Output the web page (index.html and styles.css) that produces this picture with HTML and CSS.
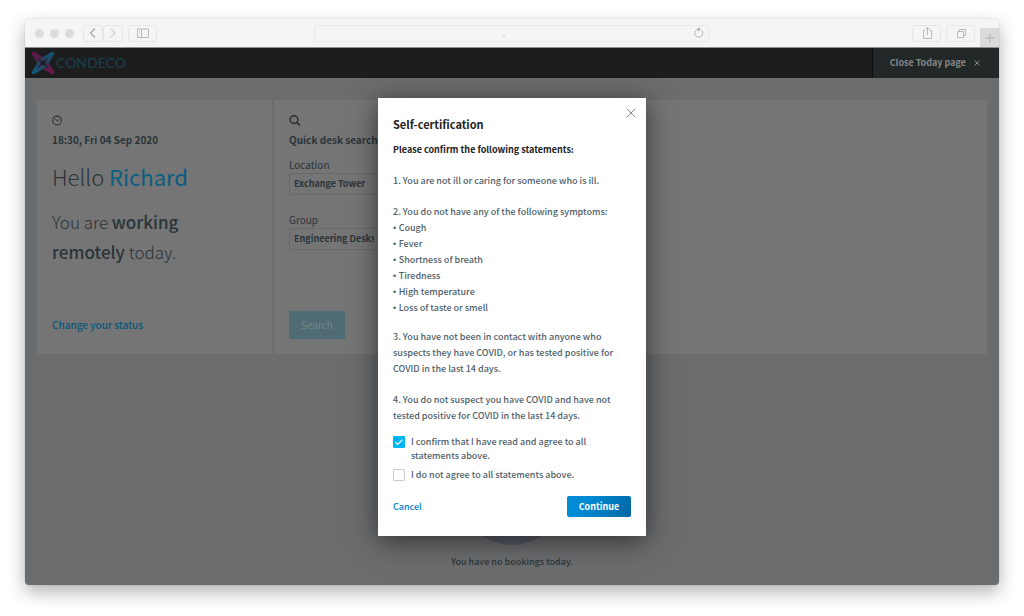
FILE: index.html
```html
<!DOCTYPE html>
<html lang="en">
<head>
<meta charset="utf-8">
<title>Condeco – Today</title>
<link rel="stylesheet" href="styles.css">
</head>
<body>
<div class="window">
  <div class="toolbar">
    <div class="lights"><span class="light"></span><span class="light"></span><span class="light"></span></div>
    <div class="nav">
      <button class="tool tool-nav" aria-label="Back"><svg width="20" height="16" viewBox="0 0 20 16"><path d="M12 3.5 7.500 8l4.500 4.500" fill="none" stroke="#a9a9a9" stroke-width="1.300"/></svg></button>
      <button class="tool tool-nav" aria-label="Forward"><svg width="20" height="16" viewBox="0 0 20 16"><path d="M7.500 3.500 12 8l-4.500 4.500" fill="none" stroke="#d4d4d4" stroke-width="1.300"/></svg></button>
    </div>
    <button class="tool" aria-label="Sidebar"><svg width="16" height="16" viewBox="0 0 16 16"><path d="M2.500 4h11v8.500h-11zM6.500 4v8.500" fill="none" stroke="#b9b9b9"/><path d="M4 6h1M4 8h1" stroke="#c9c9c9"/></svg></button>
    <div class="address">
      <input class="address-input" aria-label="Address" value=".">
      <button class="reload" aria-label="Reload"><svg width="12" height="12" viewBox="0 0 12 12"><path d="M8.800 3.600A4 4 0 1 1 5.500 2.200" fill="none" stroke="#b5b5b5"/><path d="M5 0l3.200 2.200L5 4.400z" fill="#b5b5b5"/></svg></button>
    </div>
    <div class="tools-right">
      <button class="tool" aria-label="Share"><svg width="16" height="16" viewBox="0 0 16 16"><path d="M6 5.500H4.500v8h8v-8H11M8.500 10V2.500M6.500 4.500l2-2 2 2" fill="none" stroke="#b9b9b9"/></svg></button>
      <button class="tool" aria-label="Tabs"><svg width="16" height="16" viewBox="0 0 16 16"><path d="M4.500 6.500h6v6h-6zM6.500 6.500v-2h6v6h-2" fill="none" stroke="#b9b9b9"/></svg></button>
    </div>
    <button class="new-tab" aria-label="New tab"><svg width="10" height="10" viewBox="0 0 10 10"><path d="M5 .5v9M.5 5h9" stroke="#adadad"/></svg></button>
  </div>

  <div class="app">
    <header class="header">
      <div class="brand">
        <svg class="mark" width="24" height="24" viewBox="0 0 24 24" aria-hidden="true">
          <defs>
            <linearGradient id="pink" x1="0" y1="0" x2="1" y2="1"><stop offset="0" stop-color="#6d1548"/><stop offset=".45" stop-color="#35294d"/><stop offset=".7" stop-color="#51214e"/><stop offset="1" stop-color="#781449"/></linearGradient>
            <linearGradient id="blue" x1="1" y1="0" x2="0" y2="1"><stop offset="0" stop-color="#145373"/><stop offset=".5" stop-color="#2c3d5d"/><stop offset="1" stop-color="#0c5c80"/></linearGradient>
          </defs>
          <g fill="none" stroke-width="3.400" stroke-linecap="round" stroke-linejoin="round">
            <path d="M2.500 2.500 13 8.500M2.500 2.500 8 12M21.500 21.500 10.500 15.500M21.500 21.500 16 12" stroke="url(#pink)"/>
            <path d="M21.500 2.500 11 8.500M21.500 2.500 16 12M2.500 21.500 8 12M2.500 21.500 13 15.500" stroke="url(#blue)"/>
          </g>
        </svg>
        <span class="wordmark">CONDECO</span>
      </div>
      <button class="close-today">Close Today page
        <svg width="6" height="6" viewBox="0 0 6 6"><path d="M.5.5l5 5M5.500.5l-5 5" stroke="#858888"/></svg>
      </button>
    </header>

    <main class="content">
      <div class="cards">
        <section class="card status">
          <svg class="icon" width="12" height="12" viewBox="0 0 12 12"><circle cx="5" cy="6.500" r="4.400" fill="none" stroke="#2e363b" stroke-width="1.100"/><path d="M2.800 4.600l2.400 2.200 2-1" fill="none" stroke="#2e363b"/></svg>
          <h2 class="card-title">18:30, Fri 04 Sep 2020</h2>
          <p class="hello">Hello <span class="name">Richard</span></p>
          <p class="where">You are <b>working remotely</b> today.</p>
          <a class="change" href="#">Change your status</a>
        </section>
        <section class="card search">
          <svg class="icon" width="12" height="12" viewBox="0 0 12 12"><circle cx="5" cy="5.600" r="3.900" fill="none" stroke="#252c31" stroke-width="1.400"/><path d="M7.800 8.400l3 3" stroke="#252c31" stroke-width="1.600"/></svg>
          <h2 class="card-title">Quick desk search</h2>
          <label class="label" for="location">Location</label>
          <select class="select" id="location"><option>Exchange Tower</option></select>
          <label class="label" for="group">Group</label>
          <select class="select" id="group"><option>Engineering Desks</option></select>
          <button class="search-button">Search</button>
        </section>
      </div>
      <div class="empty">
        <div class="empty-art"></div>
        <p class="empty-text">You have no bookings today.</p>
      </div>
    </main>

    <div class="overlay">
      <form class="modal" role="dialog" aria-labelledby="modal-title">
        <button type="button" class="modal-close" aria-label="Close"><svg width="10" height="10" viewBox="0 0 10 10"><path d="M.7.7l8.600 8.600M9.300.7.7 9.300" stroke="#7c8a92"/></svg></button>
        <h1 class="modal-title" id="modal-title">Self-certification</h1>
        <p class="lead">Please confirm the following statements:</p>
        <p class="statement">1. You are not ill or caring for someone who is ill.</p>
        <p class="statement intro">2. You do not have any of the following symptoms:</p>
        <ul class="symptoms">
          <li>Cough</li><li>Fever</li><li>Shortness of breath</li><li>Tiredness</li><li>High temperature</li><li>Loss of taste or smell</li>
        </ul>
        <p class="statement">3. You have not been in contact with anyone who suspects they have COVID, or has tested positive for COVID in the last 14 days.</p>
        <p class="statement">4. You do not suspect you have COVID and have not tested positive for COVID in the last 14 days.</p>
        <div class="choices">
          <label class="choice"><input class="tick" type="checkbox" checked><span>I confirm that I have read and agree to all statements above.</span></label>
          <label class="choice"><input class="tick" type="checkbox"><span>I do not agree to all statements above.</span></label>
        </div>
        <div class="actions">
          <button type="button" class="cancel">Cancel</button>
          <button type="submit" class="continue">Continue</button>
        </div>
      </form>
    </div>
  </div>
</div>
</body>
</html>
```

FILE: styles.css
```css
* { box-sizing: border-box; }
body, h1, h2, p, ul { margin: 0; padding: 0; }
body {
  padding: 19px 25px 31px;
  background: #fff;
  color: #2b3439;
  font: 10px/16px "Noto Sans CJK SC", "Noto Sans", sans-serif;
}
button, input, select { font: inherit; color: inherit; }
button { padding: 0; border: 0; background: none; cursor: pointer; }
svg { display: block; flex: none; }

.window {
  display: flex;
  flex-direction: column;
  min-height: calc(100vh - 50px);
  border-radius: 4px;
  overflow: hidden;
  box-shadow: 0 0 1px rgba(0, 0, 0, .4), 0 7px 18px rgba(0, 0, 0, .3);
}

.toolbar {
  display: flex;
  align-items: center;
  height: 29px;
  padding-left: 10px;
  background: #f5f5f5;
  border-bottom: 1px solid #8d8f8e;
}
.lights { display: flex; gap: 6px; margin-right: 9px; }
.light { width: 9px; height: 9px; border-radius: 50%; background: #dcdcdc; }
.nav { display: flex; margin-right: 5px; }
.tool {
  display: flex;
  align-items: center;
  justify-content: center;
  width: 29px;
  height: 17px;
  border: 1px solid #e7e7e7;
  border-radius: 3px;
}
.tool-nav { width: 20px; }
.address {
  display: flex;
  align-items: center;
  flex: 1;
  max-width: 395px;
  height: 17px;
  margin: 0 auto 0 157px;
  padding-right: 3px;
  border: 1px solid #e8e8e8;
  border-radius: 3px;
}
.address-input {
  flex: 1;
  min-width: 0;
  padding: 0;
  border: 0;
  background: none;
  color: #aaa;
  text-align: center;
}
.tools-right { display: flex; gap: 5px; margin-right: 5px; }
.new-tab {
  display: flex;
  align-items: center;
  justify-content: center;
  align-self: flex-end;
  width: 19px;
  height: 19px;
  background: #dadada;
}

.app { position: relative; display: flex; flex: 1; flex-direction: column; background: #6b6c6e; }
.header { display: flex; justify-content: space-between; height: 30px; background: #1d1d1d; }
.brand { display: flex; align-items: center; gap: 1px; padding-left: 6px; }
.wordmark { color: #184050; font: 14px/20px Lato, sans-serif; }
.close-today {
  display: flex;
  align-items: center;
  gap: 8px;
  padding: 0 19px 0 17px;
  background: #222728;
  border-left: 1px solid #0c0c0c;
  color: #858888;
  font-size: 9px;
  font-weight: 700;
}

.content { display: flex; flex: 1; flex-direction: column; padding: 22px 12px 15px; }
.cards { display: grid; grid-template-columns: 235px 1fr; gap: 2px; }
.card {
  display: flex;
  flex-direction: column;
  align-items: flex-start;
  min-height: 254px;
  padding: 14px 15px 15px;
  background: #757575;
}
.icon { margin-bottom: 6px; }
.card-title { font-size: 10px; line-height: 16px; font-weight: 700; }
.hello { margin-top: 12px; font-size: 22px; line-height: 32px; font-weight: 200; }
.name { color: #075f82; font-weight: 400; }
.where { max-width: 160px; margin-top: 15px; font-size: 17px; line-height: 30px; font-weight: 200; }
.where b { font-weight: 500; }
.change { margin-top: auto; margin-bottom: 6px; color: #07597a; font-weight: 500; text-decoration: none; }
.label { margin-top: 9px; }
.select {
  width: 130px;
  height: 22px;
  margin-bottom: 8px;
  padding: 0 44px 0 4px;
  border: 1px solid #686a6b;
  border-radius: 2px;
  background: none;
  appearance: none;
  font-weight: 700;
  font-size: 9px;
}
.search-button { width: 56px; height: 28px; margin-top: auto; background: #4f6b74; color: #74878c; }

.empty { display: flex; flex-direction: column; align-items: center; margin-top: auto; }
.empty-art { width: 104px; height: 104px; border-radius: 50%; background: #565b63; }
.empty-text { margin-top: 9px; font-size: 9px; font-weight: 500; }

.overlay { position: absolute; inset: 0; display: flex; align-items: flex-start; justify-content: center; padding-top: 50px; }
.modal {
  position: relative;
  width: 268px;
  padding: 16px 15px 19px;
  background: #fff;
  color: #4f616b;
  box-shadow: 0 5px 25px rgba(0, 0, 0, .55);
  font-size: 9px;
  font-weight: 500;
}
.modal-close { position: absolute; top: 10px; right: 10px; }
.modal-title { margin-bottom: 8px; color: #222; font-size: 11px; line-height: 20px; font-weight: 700; }
.lead { margin-bottom: 15px; color: #222; font-weight: 700; }
.statement { margin-bottom: 15px; }
.intro { margin-bottom: 0; }
.symptoms { margin-bottom: 13px; list-style: none; }
.symptoms li::before { content: "• "; font-family: "Liberation Sans", sans-serif; }
.choices { display: grid; gap: 5px; margin-top: -4px; line-height: 14px; }
.choice { display: flex; align-items: flex-start; gap: 6px; }
.choice span { max-width: 200px; }
.tick {
  flex: none;
  width: 12px;
  height: 12px;
  margin: 1px 0 0;
  border: 1px solid #c4cdd2;
  border-radius: 1px;
  appearance: none;
}
.tick:checked {
  border-color: #00b5f1;
  background: #00b5f1 url("data:image/svg+xml,%3Csvg xmlns='http://www.w3.org/2000/svg' viewBox='0 0 10 10'%3E%3Cpath d='M1.500 5.200l2.300 2.200L8.500 2.700' fill='none' stroke='white' stroke-width='1.200'/%3E%3C/svg%3E");
}
.actions { display: flex; align-items: center; justify-content: space-between; margin-top: 14px; }
.cancel { color: #0080c6; font-weight: 500; }
.continue {
  width: 64px;
  height: 21px;
  border-radius: 2px;
  background: linear-gradient(120deg, #008bd5 30%, #0066a4);
  color: #fff;
  font-weight: 700;
}
```
